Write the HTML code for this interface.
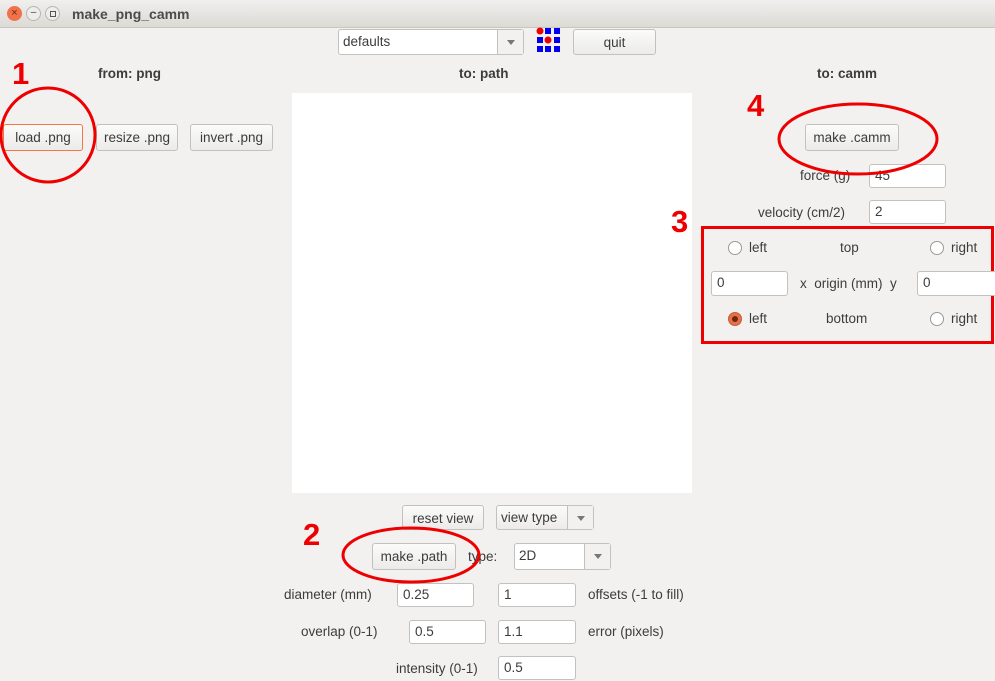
<!DOCTYPE html>
<html><head><meta charset="utf-8"><style>
*{box-sizing:border-box;margin:0;padding:0}
body{width:995px;height:681px;background:#f2f1f0;font-family:"Liberation Sans","DejaVu Sans",sans-serif;font-size:13.5px;color:#3c3c3c;position:relative;overflow:hidden}
.a{position:absolute}
.btn{position:absolute;border:1px solid #c3c1bd;border-radius:3px;background:linear-gradient(#fbfbfa,#ecebea);text-align:center;line-height:25px;white-space:nowrap}
.inp{position:absolute;border:1px solid #c3c1bd;border-radius:3px;background:#fff;line-height:22px;padding-left:5px}
.lbl{position:absolute;white-space:nowrap;line-height:16px}
.b{font-weight:bold}
.combo{position:absolute;border:1px solid #c3c1bd;border-radius:3px;background:#fff;line-height:24px;padding-left:4px}
.combo .arr{position:absolute;right:0;top:0;bottom:0;width:26px;border-left:1px solid #c3c1bd;background:#f2f1f0}
.combo .arr:after{content:"";position:absolute;left:9px;top:10px;border-left:4px solid transparent;border-right:4px solid transparent;border-top:5px solid #777}
.rad{position:absolute;width:14px;height:14px;border:1px solid #999;border-radius:50%;background:#fff}
.red{position:absolute;color:#e00;font-weight:bold;font-size:31px;line-height:30px}
</style></head><body>
<div class="a" style="left:0;top:0;width:995px;height:28px;background:linear-gradient(#f0efed,#dcdad5);border-bottom:1px solid #c8c6c0"></div>
<div class="a" style="left:7px;top:6px;width:15px;height:15px;border-radius:50%;background:#f0714a;color:#6a2a10;font-size:11px;line-height:15px;text-align:center">×</div>
<div class="a" style="left:26px;top:6px;width:15px;height:15px;border-radius:50%;border:1px solid #b8b6b0;background:#eeedeb;font-size:10px;line-height:12px;text-align:center">–</div>
<div class="a" style="left:45px;top:6px;width:15px;height:15px;border-radius:50%;border:1px solid #b8b6b0;background:#eeedeb"><div class="a" style="left:4px;top:4px;width:6px;height:6px;border:1px solid #555"></div></div>
<div class="lbl b" style="left:72px;top:6px;color:#4c4c4c;font-size:14px">make_png_camm</div>

<div class="combo" style="left:338px;top:29px;width:186px;height:26px">defaults<div class="arr"></div></div>
<svg class="a" style="left:536px;top:27px" width="26" height="26">
<g fill="#0000ee"><rect x="9" y="1" width="6" height="6"/><rect x="18" y="1" width="6" height="6"/><rect x="1" y="10" width="6" height="6"/><rect x="18" y="10" width="6" height="6"/><rect x="1" y="19" width="6" height="6"/><rect x="9" y="19" width="6" height="6"/><rect x="18" y="19" width="6" height="6"/></g>
<circle cx="4" cy="4" r="3.5" fill="#ee0000"/><circle cx="12" cy="13" r="3.5" fill="#ee0000"/></svg>
<div class="btn" style="left:573px;top:29px;width:83px;height:26px">quit</div>

<div class="lbl b" style="left:98px;top:66px">from: png</div>
<div class="lbl b" style="left:459px;top:66px">to: path</div>
<div class="lbl b" style="left:817px;top:66px">to: camm</div>

<div class="a" style="left:292px;top:93px;width:400px;height:400px;background:#fff"></div>

<div class="btn" style="left:3px;top:124px;width:80px;height:27px;border-color:#f07746">load .png</div>
<div class="btn" style="left:96px;top:124px;width:82px;height:27px">resize .png</div>
<div class="btn" style="left:190px;top:124px;width:83px;height:27px">invert .png</div>

<div class="btn" style="left:805px;top:124px;width:94px;height:27px">make .camm</div>
<div class="lbl" style="left:800px;top:168px">force (g)</div>
<div class="inp" style="left:869px;top:164px;width:77px;height:24px">45</div>
<div class="lbl" style="left:758px;top:205px">velocity (cm/2)</div>
<div class="inp" style="left:869px;top:200px;width:77px;height:24px">2</div>

<div class="a" style="left:701px;top:226px;width:293px;height:118px;border:3px solid #ee0000"></div>
<div class="rad" style="left:728px;top:241px"></div>
<div class="lbl" style="left:749px;top:240px">left</div>
<div class="lbl" style="left:840px;top:240px">top</div>
<div class="rad" style="left:930px;top:241px"></div>
<div class="lbl" style="left:951px;top:240px">right</div>
<div class="inp" style="left:711px;top:271px;width:77px;height:25px">0</div>
<div class="lbl" style="left:800px;top:276px">x &nbsp;origin (mm) &nbsp;y</div>
<div class="inp" style="left:917px;top:271px;width:80px;height:25px">0</div>
<div class="a" style="left:728px;top:312px;width:14px;height:14px;border-radius:50%;background:#e8704a;border:1px solid #c85a35"><div class="a" style="left:3px;top:3px;width:6px;height:6px;border-radius:50%;background:#6a2a12"></div></div>
<div class="lbl" style="left:749px;top:311px">left</div>
<div class="lbl" style="left:826px;top:311px">bottom</div>
<div class="rad" style="left:930px;top:312px"></div>
<div class="lbl" style="left:951px;top:311px">right</div>

<div class="btn" style="left:402px;top:505px;width:82px;height:25px">reset view</div>
<div class="combo" style="left:496px;top:505px;width:98px;height:25px;background:linear-gradient(#fbfbfa,#ecebea)">view type<div class="arr"></div></div>
<div class="btn" style="left:372px;top:543px;width:84px;height:27px">make .path</div>
<div class="lbl" style="left:468px;top:549px">type:</div>
<div class="combo" style="left:514px;top:543px;width:97px;height:27px">2D<div class="arr"></div></div>

<div class="lbl" style="left:284px;top:587px">diameter (mm)</div>
<div class="inp" style="left:397px;top:583px;width:77px;height:24px">0.25</div>
<div class="inp" style="left:498px;top:583px;width:78px;height:24px">1</div>
<div class="lbl" style="left:588px;top:587px">offsets (-1 to fill)</div>
<div class="lbl" style="left:301px;top:624px">overlap (0-1)</div>
<div class="inp" style="left:409px;top:620px;width:77px;height:24px">0.5</div>
<div class="inp" style="left:498px;top:620px;width:78px;height:24px">1.1</div>
<div class="lbl" style="left:588px;top:624px">error (pixels)</div>
<div class="lbl" style="left:396px;top:661px">intensity (0-1)</div>
<div class="inp" style="left:498px;top:656px;width:78px;height:24px">0.5</div>

<div class="red" style="left:12px;top:59px">1</div>
<div class="red" style="left:303px;top:520px">2</div>
<div class="red" style="left:671px;top:207px">3</div>
<div class="red" style="left:747px;top:91px">4</div>
<svg class="a" style="left:0;top:0" width="995" height="681" fill="none" stroke="#ee0000" stroke-width="3">
<ellipse cx="48" cy="135" rx="47" ry="47"/>
<ellipse cx="858" cy="139" rx="79" ry="35"/>
<ellipse cx="411" cy="555" rx="68" ry="27"/>
</svg>
</body></html>
